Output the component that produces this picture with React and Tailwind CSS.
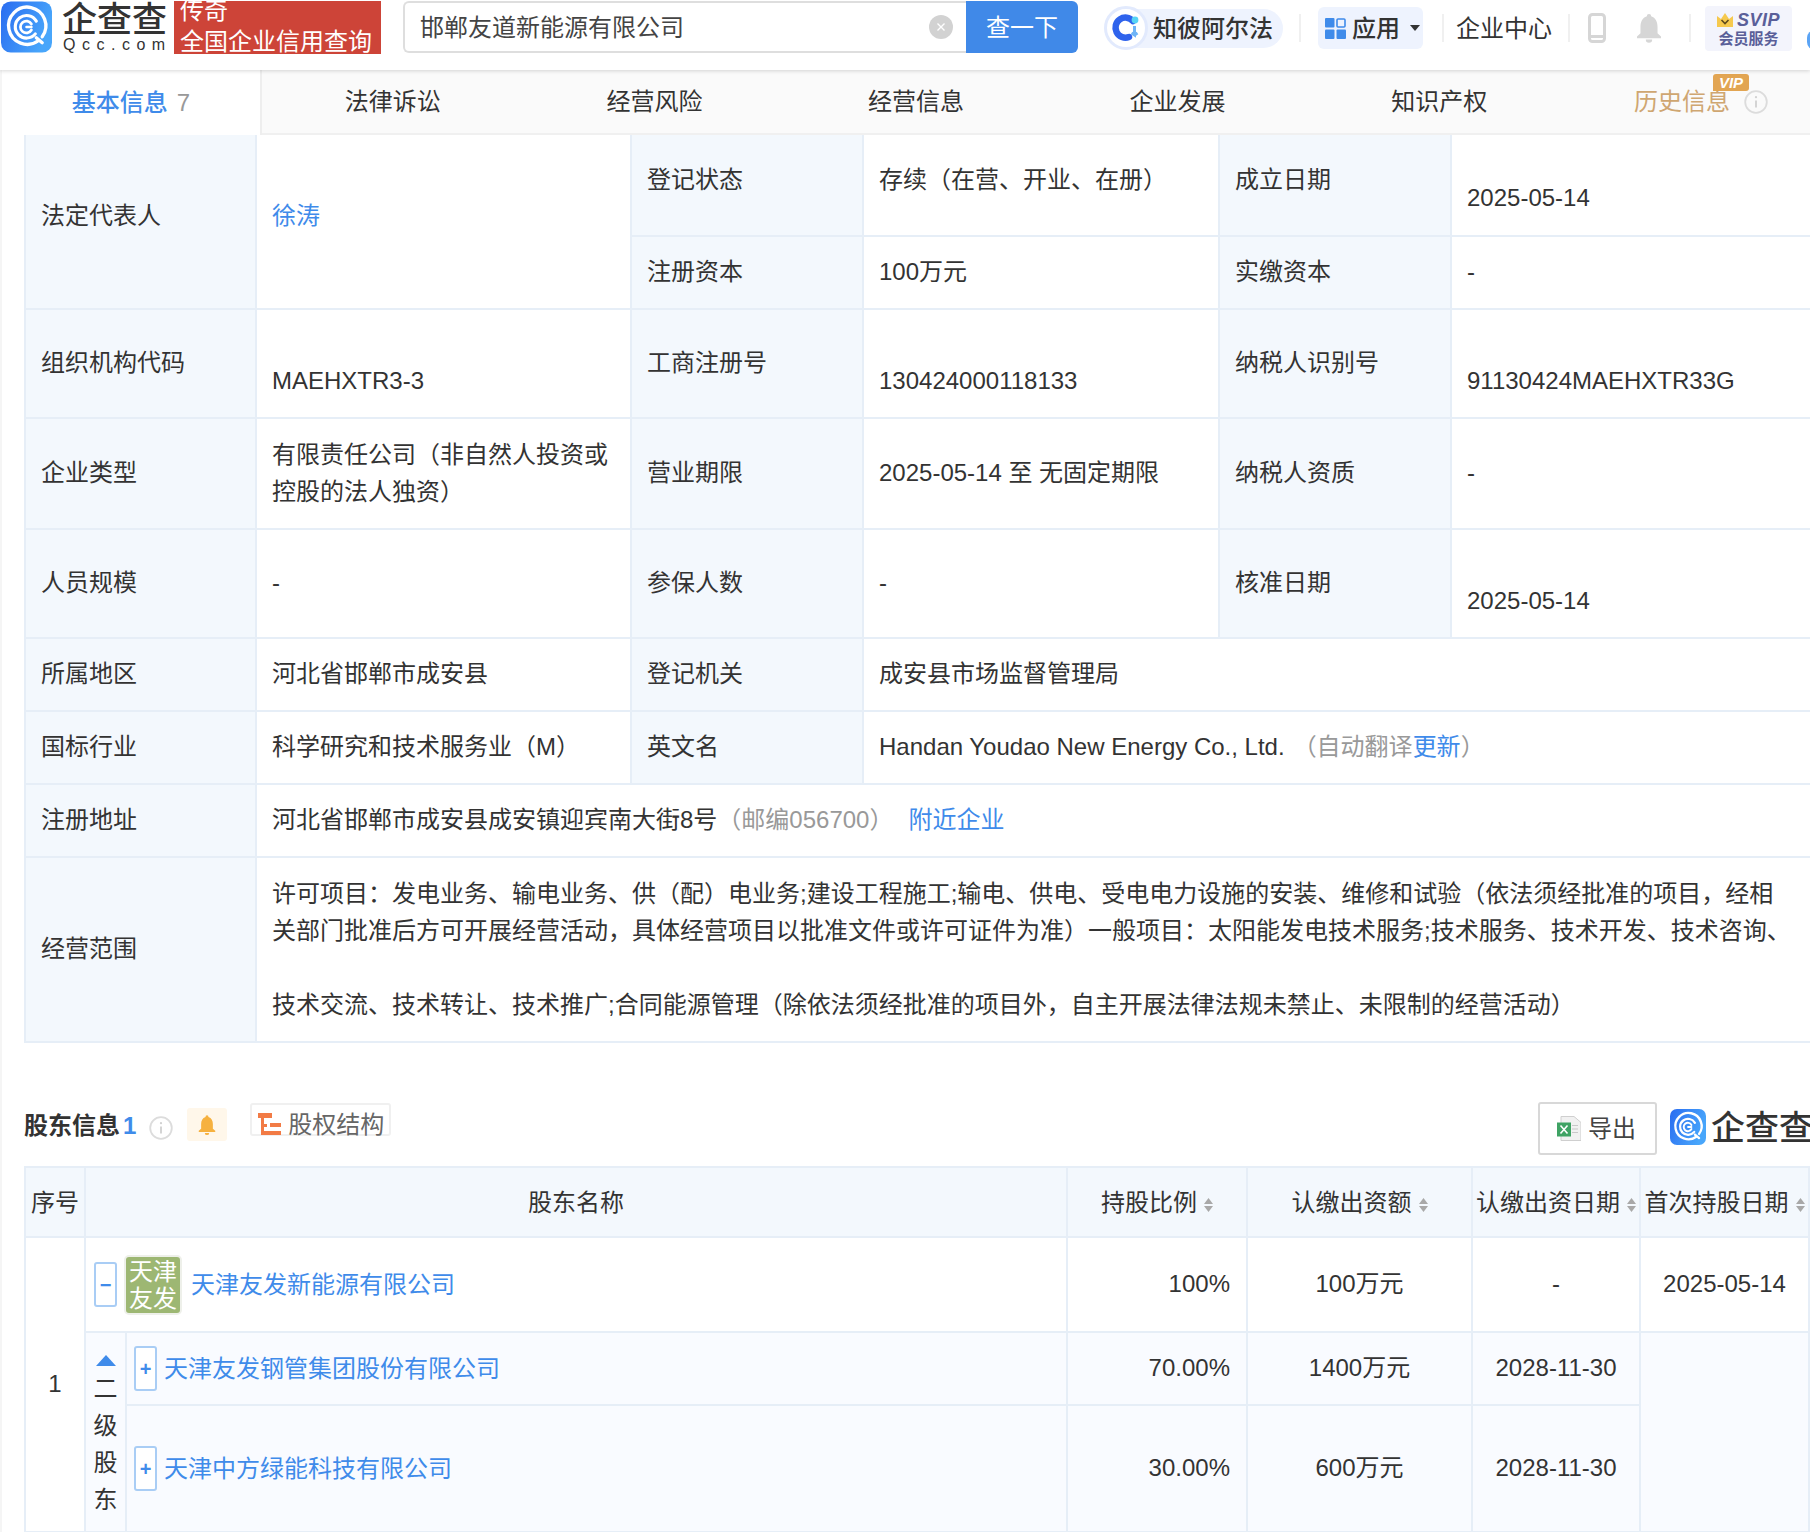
const BLUE = "text-[#3f8bea]";

const LogoMark = ({ className }) => {
  return (
    <svg viewBox="0 0 52 52" className={className}>
      <defs>
        <linearGradient id="logoGrad" x1="0" y1="0" x2="1" y2="0.4">
          <stop offset="0" stopColor="#2a6cf0" />
          <stop offset="1" stopColor="#48a6fb" />
        </linearGradient>
      </defs>
      <rect width="52" height="52" rx="10" fill="url(#logoGrad)" />
      <g fill="none" stroke="#fff" strokeLinecap="round">
        <path d="M38 40A19 19 0 1 1 42 36" strokeWidth="3.4" />
        <path d="M36 37l6 5" strokeWidth="3.4" />
        <path d="M35 33A11.5 11.5 0 1 1 36 20" strokeWidth="3.2" />
        <path d="M31 29A6 6 0 1 1 31 23" strokeWidth="2.8" />
        <path d="M26 26h5" strokeWidth="2.6" />
      </g>
    </svg>
  );
};

const InfoIcon = ({ className }) => {
  return (
    <svg viewBox="0 0 24 24" className={className} fill="none">
      <circle cx="12" cy="12" r="10.8" stroke="#dcdcdc" strokeWidth="1.8" />
      <circle cx="12" cy="7.2" r="1.1" fill="#d0d0d0" />
      <path d="M12 10.5v7" stroke="#d0d0d0" strokeWidth="1.8" />
    </svg>
  );
};

const BellIcon = ({ className, color }) => {
  return (
    <svg viewBox="0 0 24 24" className={className}>
      <path
        fill={color}
        d="M12 1.5a1.6 1.6 0 0 1 1.6 1.7C17 4.2 18.4 7.5 18.4 11v5l2.6 2.4V19.6H3v-1.2L5.6 16v-5c0-3.5 1.4-6.8 4.8-7.8A1.6 1.6 0 0 1 12 1.5zM9.6 20.6h4.8a2.4 2.4 0 0 1-4.8 0z"
      />
    </svg>
  );
};

const SortIcon = () => {
  return (
    <svg viewBox="0 0 9 14" className="inline-block w-[9px] h-[14px] ml-[7px] align-[-1px]">
      <path d="M4.5 0L9 6H0z" fill="#a8a8a8" />
      <path d="M4.5 14L0 8h9z" fill="#a8a8a8" />
    </svg>
  );
};

const ToggleBtn = ({ sign }) => {
  return (
    <span className={`flex items-center justify-center shrink-0 w-[23px] h-[45px] bg-white border-2 border-[#a9cdf5] rounded-[3px] text-[20px] leading-none font-bold ${BLUE}`}>
      {sign}
    </span>
  );
};

const Label = ({ children, ...rest }) => {
  return (
    <td {...rest} className="border-2 border-[#e6eef7] bg-[#f3f8fd] pl-[15px] pr-2 pb-[2px] text-[#333]">
      {children}
    </td>
  );
};

const Val = ({ children, low, ...rest }) => {
  return (
    <td {...rest} className={`border-2 border-[#e6eef7] pl-[15px] pr-[14px] pb-[2px] text-[#333] ${low ? "pt-9" : ""}`}>
      {children}
    </td>
  );
};

const Th = ({ children, sort }) => {
  return (
    <th className="border-2 border-[#e6eef7] bg-[#f3f8fd] font-normal text-center whitespace-nowrap text-[#333]">
      {children}
      {sort && <SortIcon />}
    </th>
  );
};

const Td = ({ children, right, ...rest }) => {
  return (
    <td {...rest} className={`border-2 border-[#e6eef7] pb-[2px] text-[#333] ${right ? "text-right pr-[16px]" : "text-center"}`}>
      {children}
    </td>
  );
};

const Header = () => {
  return (
    <div className="relative z-20 flex items-center w-full h-[70px] pb-[14px] bg-white overflow-hidden shadow-[0_1px_4px_rgba(0,0,0,0.16)]">
      <LogoMark className="ml-[1px] mb-[2px] w-[51px] h-[52px] shrink-0" />
      <div className="ml-[10px] w-[105px] shrink-0 flex flex-col items-start text-[#333]">
        <span className="text-[35px] leading-[34px] font-medium whitespace-nowrap">企查查</span>
        <span className="ml-[1px] text-[16px] leading-[16px] tracking-[6.5px] whitespace-nowrap">Qcc.com</span>
      </div>
      <div className="ml-[7px] w-[207px] h-[53px] mb-[2px] shrink-0 bg-[#cd4438] text-white text-[24px] leading-[31px] pl-[6px] overflow-hidden whitespace-nowrap">
        <div className="-mt-[6px]">传奇</div>
        <div>全国企业信用查询</div>
      </div>
      <div className="ml-[22px] mb-[2px] flex w-[675px] h-[52px] shrink-0">
        <div className="flex-1 flex items-center justify-between border-2 border-r-0 border-[#dedede] rounded-l-md pl-[15px] pr-[13px] text-[#444]">
          <span>邯郸友道新能源有限公司</span>
          <span className="flex items-center justify-center w-6 h-6 rounded-full bg-[#d2d2d2]">
            <svg viewBox="0 0 10 10" className="w-[10px] h-[10px]">
              <path d="M1.5 1.5l7 7M8.5 1.5l-7 7" stroke="#fff" strokeWidth="1.4" />
            </svg>
          </span>
        </div>
        <div className="w-[112px] flex items-center justify-center bg-[#4089e8] rounded-r-md text-white">查一下</div>
      </div>

      <div className="relative ml-[27px] w-[178px] h-[39px] shrink-0 bg-[#eef3fe] rounded-[20px] flex items-center pl-[48px] font-medium text-[#333] whitespace-nowrap">
        <svg viewBox="0 0 44 44" className="absolute -left-[1px] -top-[3px] w-[44px] h-[44px]">
          <circle cx="22" cy="22" r="20.5" fill="#fff" stroke="#e2eafd" strokeWidth="3" />
          <path d="M29 15A10 10 0 1 0 25 31" fill="none" stroke="#2f63ec" strokeWidth="6.5" strokeLinecap="round" />
          <circle cx="31" cy="14" r="3.4" fill="#57d3f5" />
          <path d="M30.5 20v9l-3-2M30.5 29l3-2" fill="none" stroke="#6fb4f7" strokeWidth="3" />
        </svg>
        知彼阿尔法
      </div>
      <div className="ml-[16px] w-[2px] h-[28px] shrink-0 bg-[#f0f0f0]"></div>
      <div className="ml-[17px] w-[105px] h-[42px] shrink-0 bg-[#eef3fe] rounded-md flex items-center pl-[7px] font-medium text-[#333]">
        <svg viewBox="0 0 21 21" className="w-[21px] h-[21px] mr-[6px]">
          <rect x="0" y="0" width="9.5" height="9.5" rx="1" fill="#3f8bea" />
          <rect x="12" y="1" width="8" height="8" rx="1" fill="none" stroke="#3f8bea" strokeWidth="1.6" />
          <rect x="0" y="11.5" width="9.5" height="9.5" rx="1" fill="#3f8bea" />
          <rect x="11.5" y="11.5" width="9.5" height="9.5" rx="1" fill="#3f8bea" />
        </svg>
        应用
        <svg viewBox="0 0 10 6" className="w-[10px] h-[6px] ml-[10px]">
          <path d="M0 0h10L5 6z" fill="#333" />
        </svg>
      </div>
      <div className="ml-[19px] w-[2px] h-[28px] shrink-0 bg-[#f0f0f0]"></div>
      <div className="ml-[12px] w-[98px] shrink-0 text-[#333] whitespace-nowrap">企业中心</div>
      <div className="ml-[14px] w-[2px] h-[28px] shrink-0 bg-[#f0f0f0]"></div>
      <svg viewBox="0 0 18 30" className="ml-[18px] w-[18px] h-[30px] shrink-0">
        <rect x="1.5" y="1.5" width="15" height="27" rx="3" fill="none" stroke="#d6d6d6" strokeWidth="3" />
        <path d="M1.5 23.5h15" stroke="#d6d6d6" strokeWidth="3" />
      </svg>
      <BellIcon className="ml-[27px] w-[32px] h-[32px] shrink-0" color="#d6d6d6" />
      <div className="ml-[24px] w-[2px] h-[28px] shrink-0 bg-[#f0f0f0]"></div>
      <div className="ml-[14px] w-[87px] h-[45px] shrink-0 bg-[#f3f4fc] rounded-[4px] flex flex-col items-center pt-[4px] text-[#5a5f99]">
        <div className="flex items-center h-[20px]">
          <svg viewBox="0 0 16 14" className="w-[16px] h-[14px] mr-[4px]">
            <path d="M0 3l4 3 4-6 4 6 4-3v11H0z" fill="#f6c94e" />
            <path d="M4.5 7l3.5 3.5L11.5 7" fill="none" stroke="#5d4a1e" strokeWidth="1.6" />
          </svg>
          <span className="text-[18px] leading-[20px] font-bold italic tracking-[0.5px]">SVIP</span>
        </div>
        <span className="text-[15px] leading-[18px] font-bold whitespace-nowrap">会员服务</span>
      </div>
      <div className="ml-[15px] w-[12px] h-[20px] mt-[24px] shrink-0 rounded-l-lg bg-[#5ba4f5]"></div>
    </div>
  );
};

const Tabs = () => {
  const items = ["法律诉讼", "经营风险", "经营信息", "企业发展", "知识产权"];
  return (
    <div className="relative z-10 flex h-[65px] bg-[#fafafa] border-b-2 border-[#f0f0f0]">
      <div className="w-[260px] h-[65px] shrink-0 bg-white border-r-2 border-[#eeeeee] flex items-center justify-center font-medium text-[#3f8bea]">
        基本信息<span className="ml-[9px] font-normal text-[#999]">7</span>
      </div>
      {items.map((t) => (
        <div key={t} className="w-[261.6px] shrink-0 flex items-center justify-center text-[#333]">
          {t}
        </div>
      ))}
      <div className="relative flex-1 flex items-center pl-[64px] text-[#cfa671] whitespace-nowrap">
        历史信息
        <InfoIcon className="ml-[14px] w-[24px] h-[24px] shrink-0" />
        <span className="absolute left-[143px] top-[4px] w-[36px] h-[17px] rounded-[3px] rounded-bl-none bg-[#e2a552] text-white text-[15px] leading-[17px] font-bold italic text-center">
          VIP
        </span>
      </div>
    </div>
  );
};

const InfoTable = () => {
  return (
    <table className="relative ml-[22px] -mt-[12px] w-[1786px] table-fixed">
      <colgroup>
        <col className="w-[231px]" />
        <col className="w-[375px]" />
        <col className="w-[232px]" />
        <col className="w-[356px]" />
        <col className="w-[232px]" />
        <col className="w-[360px]" />
      </colgroup>
      <tbody>
        <tr className="h-[112px]">
          <Label rowSpan={2}>法定代表人</Label>
          <Val rowSpan={2}><span className={BLUE}>徐涛</span></Val>
          <Label>登记状态</Label>
          <Val>存续（在营、开业、在册）</Val>
          <Label>成立日期</Label>
          <Val low>2025-05-14</Val>
        </tr>
        <tr className="h-[73px]">
          <Label>注册资本</Label>
          <Val>100万元</Val>
          <Label>实缴资本</Label>
          <Val>-</Val>
        </tr>
        <tr className="h-[109px]">
          <Label>组织机构代码</Label>
          <Val low>MAEHXTR3-3</Val>
          <Label>工商注册号</Label>
          <Val low>130424000118133</Val>
          <Label>纳税人识别号</Label>
          <Val low>91130424MAEHXTR33G</Val>
        </tr>
        <tr className="h-[111px]">
          <Label>企业类型</Label>
          <Val>有限责任公司（非自然人投资或控股的法人独资）</Val>
          <Label>营业期限</Label>
          <Val>2025-05-14 至 无固定期限</Val>
          <Label>纳税人资质</Label>
          <Val>-</Val>
        </tr>
        <tr className="h-[109px]">
          <Label>人员规模</Label>
          <Val>-</Val>
          <Label>参保人数</Label>
          <Val>-</Val>
          <Label>核准日期</Label>
          <Val low>2025-05-14</Val>
        </tr>
        <tr className="h-[73px]">
          <Label>所属地区</Label>
          <Val>河北省邯郸市成安县</Val>
          <Label>登记机关</Label>
          <Val colSpan={3}>成安县市场监督管理局</Val>
        </tr>
        <tr className="h-[73px]">
          <Label>国标行业</Label>
          <Val>科学研究和技术服务业（M）</Val>
          <Label>英文名</Label>
          <Val colSpan={3}>
            Handan Youdao New Energy Co., Ltd.
            <span className="ml-2 text-[#999]">（自动翻译</span>
            <span className={BLUE}>更新</span>
            <span className="text-[#999]">）</span>
          </Val>
        </tr>
        <tr className="h-[73px]">
          <Label>注册地址</Label>
          <Val colSpan={5}>
            河北省邯郸市成安县成安镇迎宾南大街8号
            <span className="text-[#999]">（邮编056700）</span>
            <span className={`ml-[15px] ${BLUE}`}>附近企业</span>
          </Val>
        </tr>
        <tr className="h-[185px]">
          <Label>经营范围</Label>
          <Val colSpan={5}>
            <div className="whitespace-nowrap">
              许可项目：发电业务、输电业务、供（配）电业务;建设工程施工;输电、供电、受电电力设施的安装、维修和试验（依法须经批准的项目，经相
              <br />
              关部门批准后方可开展经营活动，具体经营项目以批准文件或许可证件为准）一般项目：太阳能发电技术服务;技术服务、技术开发、技术咨询、
            </div>
            <div className="mt-[37px] whitespace-nowrap">
              技术交流、技术转让、技术推广;合同能源管理（除依法须经批准的项目外，自主开展法律法规未禁止、未限制的经营活动）
            </div>
          </Val>
        </tr>
      </tbody>
    </table>
  );
};

const Toolbar = () => {
  return (
    <div className="flex items-start h-[123px] pl-[22px] overflow-hidden">
      <div className="mt-[64px] font-bold text-[#333] whitespace-nowrap">
        股东信息<span className="ml-[3px] text-[#3f8bea]">1</span>
      </div>
      <InfoIcon className="ml-[13px] mt-[73px] w-[24px] h-[24px] shrink-0" />
      <div className="ml-[14px] mt-[65px] w-[40px] h-[33px] flex items-center justify-center bg-[#fff7ea] rounded-[3px] shrink-0">
        <BellIcon className="w-[22px] h-[24px]" color="#f6b13f" />
      </div>
      <div className="ml-[23px] mt-[60px] w-[141px] h-[33px] flex items-center pl-[6px] pt-[9px] border-2 border-[#f0f0f0] rounded-[3px] text-[#666] whitespace-nowrap shrink-0">
        <svg viewBox="0 0 24 24" className="w-[24px] h-[24px] mr-[6px] shrink-0">
          <rect x="0" y="1" width="14" height="5" fill="#f27b45" />
          <rect x="3" y="6" width="3" height="16" fill="#f27b45" />
          <rect x="3" y="12" width="6" height="3" fill="#f27b45" />
          <rect x="12" y="11" width="11" height="4" fill="#f27b45" />
          <rect x="3" y="19" width="20" height="4" fill="#f27b45" />
        </svg>
        股权结构
      </div>
      <div className="ml-auto mt-[59px] w-[119px] h-[53px] flex items-center pl-[17px] border-2 border-[#d8d8d8] rounded-[3px] text-[#444] whitespace-nowrap shrink-0">
        <svg viewBox="0 0 24 24" className="w-[24px] h-[25px] mr-[7px] shrink-0">
          <path d="M4 0h13l7 6v18H4z" fill="#f1f1f1" stroke="#cfcfcf" strokeWidth="1" />
          <path d="M15 9h6M15 12.5h6M15 16h6" stroke="#c8c8c8" strokeWidth="1.2" />
          <rect x="0" y="6" width="14" height="14" fill="#3fa364" />
          <path d="M3.5 9l7 8M10.5 9l-7 8" stroke="#fff" strokeWidth="1.6" />
        </svg>
        导出
      </div>
      <LogoMark className="ml-[13px] mt-[66px] w-[36px] h-[36px] shrink-0" />
      <span className="ml-[5px] -mr-[3px] mt-[65px] text-[34px] leading-[40px] font-medium text-[#333] whitespace-nowrap shrink-0">企查查</span>
    </div>
  );
};

const ShareholderTable = () => {
  return (
    <table className="ml-[22px] w-[1784px] table-fixed">
      <colgroup>
        <col className="w-[60px]" />
        <col className="w-[41px]" />
        <col className="w-[941px]" />
        <col className="w-[180px]" />
        <col className="w-[225px]" />
        <col className="w-[168px]" />
        <col className="w-[169px]" />
      </colgroup>
      <thead>
        <tr className="h-[70px]">
          <Th>序号</Th>
          <th colSpan={2} className="border-2 border-[#e6eef7] bg-[#f3f8fd] font-normal text-center text-[#333]">股东名称</th>
          <Th sort>持股比例</Th>
          <Th sort>认缴出资额</Th>
          <Th sort>认缴出资日期</Th>
          <Th sort>首次持股日期</Th>
        </tr>
      </thead>
      <tbody>
        <tr className="h-[95px]">
          <Td rowSpan={3}>1</Td>
          <td colSpan={2} className="border-2 border-[#e6eef7] pl-[8px]">
            <div className="flex items-center">
              <ToggleBtn sign="−" />
              <div className="ml-[7px] w-[58px] h-[60px] shrink-0 flex items-center justify-center bg-[#9db773] border-2 border-[#eef0ea] rounded-[5px] text-white text-center leading-[27px]">
                天津<br />友发
              </div>
              <span className={`ml-[9px] ${BLUE}`}>天津友发新能源有限公司</span>
            </div>
          </td>
          <Td right>100%</Td>
          <Td>100万元</Td>
          <Td>-</Td>
          <Td>2025-05-14</Td>
        </tr>
        <tr className="h-[73px] bg-[#f9fbff]">
          <td rowSpan={2} className="border-2 border-[#e6eef7] align-top pt-[22px]">
            <div className="flex flex-col items-center text-[#333]">
              <svg viewBox="0 0 20 11" className="w-[20px] h-[11px] mb-[4px]">
                <path d="M10 0l10 11H0z" fill="#3f8bea" />
              </svg>
              <span>二</span>
              <span>级</span>
              <span>股</span>
              <span>东</span>
            </div>
          </td>
          <td className="border-2 border-[#e6eef7] pl-[7px]">
            <div className="flex items-center">
              <ToggleBtn sign="+" />
              <span className={`ml-[7px] ${BLUE}`}>天津友发钢管集团股份有限公司</span>
            </div>
          </td>
          <Td right>70.00%</Td>
          <Td>1400万元</Td>
          <Td>2028-11-30</Td>
          <Td rowSpan={2}></Td>
        </tr>
        <tr className="h-[127px] bg-[#f9fbff]">
          <td className="border-2 border-[#e6eef7] pl-[7px]">
            <div className="flex items-center">
              <ToggleBtn sign="+" />
              <span className={`ml-[7px] ${BLUE}`}>天津中方绿能科技有限公司</span>
            </div>
          </td>
          <Td right>30.00%</Td>
          <Td>600万元</Td>
          <Td>2028-11-30</Td>
        </tr>
      </tbody>
    </table>
  );
};

const App = () => {
  return (
    <div className="w-[1810px] h-[1532px] overflow-hidden bg-white text-[24px] leading-[37px] font-['Liberation_Sans','Noto_Sans_CJK_SC',sans-serif]">
      <Header />
      <div className="border-l-2 border-[#f5f5f5]">
        <Tabs />
        <InfoTable />
        <Toolbar />
        <ShareholderTable />
      </div>
    </div>
  );
};

export default App;
